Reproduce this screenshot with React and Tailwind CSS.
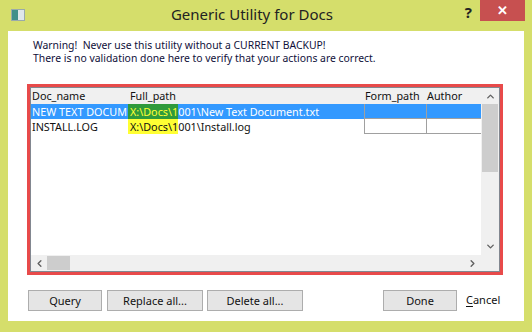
import { ChevronUp, ChevronDown, ChevronLeft, ChevronRight } from 'lucide-react';

const font = { fontFamily: '"Noto Sans", "Open Sans", sans-serif' };

const rows = [
  { name: 'NEW TEXT DOCUMENT.TXT', rest: '001\\New Text Document.txt', selected: true },
  { name: 'INSTALL.LOG', rest: '001\\Install.log', selected: false },
];

const Button = ({ children, w }) => (
  <button className={`h-[21px] ${w} border border-[#adadad] bg-[#e5e5e5] text-[11px] text-[#111] leading-none`}>
    {children}
  </button>
);

const App = () => {
  return (
    <div className="w-[532px] h-[332px] bg-[#d5de6b] flex flex-col overflow-hidden" style={font}>
      {/* Title bar */}
      <div className="h-[31px] flex items-start relative">
        <div className="w-[14px] h-[12px] mt-[9px] ml-[11px] border border-[#9aa] bg-[#dfe7ea] flex">
          <div className="w-[6px] h-full bg-[#3f8f8a]" />
        </div>
        <div className="flex-1 text-center text-[15px] text-[#222] mt-[3px] pl-[14px]">Generic Utility for Docs</div>
        <div className="text-[15px] font-bold text-[#222] mt-[1px] mr-[8px]">?</div>
        <div className="w-[45px] h-[21px] bg-[#c75050] mr-[7px] flex items-center justify-center text-white text-[13px] font-bold leading-none">
          ✕
        </div>
      </div>

      {/* Client area */}
      <div className="mx-[8px] h-[290px] bg-white flex flex-col">
        <div className="pl-[25px] pt-[8px] text-[10.4px] leading-[13px] text-[#10103a]">
          <div>Warning!&nbsp; Never use this utility without a CURRENT BACKUP!</div>
          <div>There is no validation done here to verify that your actions are correct.</div>
        </div>

        {/* Grid box */}
        <div className="ml-[19px] mt-[19px] w-[476px] h-[191px] border-[3px] border-[#e84a4a] flex">
          <div className="flex-1 border border-[#828790] flex flex-col text-[10.8px] text-[#111]">
            <div className="flex flex-1">
              <div className="flex-1 flex flex-col">
                {/* Header */}
                <div className="flex h-[16px] bg-[#f0f0f0] leading-[16px]">
                  <div className="w-[97px] pl-[1px]">Doc_name</div>
                  <div className="w-[236px] pl-[2px]">Full_path</div>
                  <div className="w-[62px] pl-[1px] whitespace-nowrap overflow-hidden">Form_path</div>
                  <div className="flex-1 pl-[1px]">Author</div>
                </div>
                {rows.map((r) => (
                  <div key={r.name} className={`flex h-[15px] leading-[15px] ${r.selected ? 'bg-[#3399ff] text-white' : 'bg-white'}`}>
                    <div className="w-[97px] pl-[1px] overflow-hidden whitespace-nowrap">{r.name}</div>
                    <div className="w-[236px] overflow-hidden whitespace-nowrap">
                      <span className={`inline-block pl-[2px] ${r.selected ? 'bg-[#2f9a3c] text-[#ffff33]' : 'bg-[#ffff33] text-[#111]'}`}>
                        X:\Docs\1
                      </span>
                      <span>{r.rest}</span>
                    </div>
                    <div className="w-[62px] border-l border-b border-[#a0a0a0]" />
                    <div className="flex-1 border-l border-b border-[#a0a0a0]" />
                  </div>
                ))}
                <div className="flex-1" />
              </div>
              {/* Vertical scrollbar */}
              <div className="w-[18px] bg-[#f0f0f0] flex flex-col">
                <div className="h-[16px] flex items-center justify-center text-[#606060]">
                  <ChevronUp size={11} strokeWidth={3} />
                </div>
                <div className="h-[68px] mx-[1px] bg-[#cdcdcd]" />
                <div className="flex-1" />
                <div className="h-[17px] flex items-center justify-center text-[#606060]">
                  <ChevronDown size={11} strokeWidth={3} />
                </div>
              </div>
            </div>
            {/* Horizontal scrollbar */}
            <div className="h-[16px] flex bg-[#f0f0f0]">
              <div className="w-[16px] flex items-center justify-center text-[#606060]">
                <ChevronLeft size={11} strokeWidth={3} />
              </div>
              <div className="w-[23px] my-[1px] bg-[#cdcdcd]" />
              <div className="flex-1" />
              <div className="w-[17px] flex items-center justify-center text-[#606060]">
                <ChevronRight size={11} strokeWidth={3} />
              </div>
              <div className="w-[18px] bg-[#f0f0f0]" />
            </div>
          </div>
        </div>

        {/* Buttons */}
        <div className="flex items-center mt-[15px] pl-[20px]">
          <Button w="w-[74px]">Query</Button>
          <div className="w-[5px]" />
          <Button w="w-[96px]">Replace all...</Button>
          <div className="w-[4px]" />
          <Button w="w-[96px]">Delete all...</Button>
          <div className="w-[80px]" />
          <Button w="w-[74px]">Done</Button>
          <div className="ml-[9px] text-[11px] text-[#111]">
            <span className="underline underline-offset-2">C</span>ancel
          </div>
        </div>
      </div>
    </div>
  );
};

export default App;
